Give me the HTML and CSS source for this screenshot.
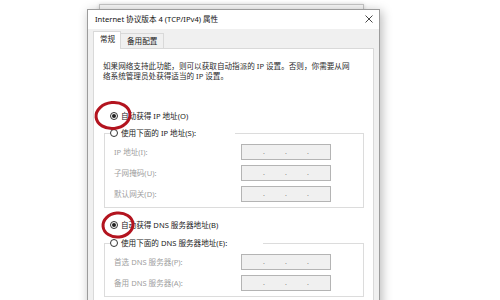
FILE: index.html
```html
<!DOCTYPE html>
<html lang="zh-CN">
<head>
<meta charset="utf-8">
<title>Internet 协议版本 4 (TCP/IPv4) 属性</title>
<link rel="stylesheet" href="styles.css">
</head>
<body>
<div class="desktop">
  <div class="backwin"></div>
  <div class="dialog">
    <div class="titlebar">
      <span class="title">Internet 协议版本 4 (TCP/IPv4) 属性</span>
      <svg class="close" width="8" height="8" viewBox="0 0 8 8"><path d="M0.5 0.5 L7.5 7.5 M7.5 0.5 L0.5 7.5" stroke="#333" stroke-width="0.9" fill="none"/></svg>
    </div>
    <div class="body">
      <div class="tabs">
        <div class="tab active">常规</div>
        <div class="tab">备用配置</div>
      </div>
      <div class="panel">
        <p class="desc">如果网络支持此功能，则可以获取自动指派的 IP 设置。否则，你需要从网<br>络系统管理员处获得适当的 IP 设置。</p>
        <div class="radio-row first"><span class="radio checked"></span><span>自动获得 IP 地址(O)</span></div>
        <fieldset class="group group-ip">
          <legend class="radio-row"><span class="radio"></span><span>使用下面的 IP 地址(S):</span></legend>
          <div class="field"><span class="label">IP 地址(I):</span><span class="ipbox"><b>.</b><b>.</b><b>.</b></span></div>
          <div class="field"><span class="label">子网掩码(U):</span><span class="ipbox"><b>.</b><b>.</b><b>.</b></span></div>
          <div class="field"><span class="label">默认网关(D):</span><span class="ipbox"><b>.</b><b>.</b><b>.</b></span></div>
        </fieldset>
        <div class="radio-row dns"><span class="radio checked"></span><span>自动获得 DNS 服务器地址(B)</span></div>
        <fieldset class="group group-dns">
          <legend class="radio-row"><span class="radio"></span><span>使用下面的 DNS 服务器地址(E):</span></legend>
          <div class="field"><span class="label">首选 DNS 服务器(P):</span><span class="ipbox"><b>.</b><b>.</b><b>.</b></span></div>
          <div class="field"><span class="label">备用 DNS 服务器(A):</span><span class="ipbox"><b>.</b><b>.</b><b>.</b></span></div>
        </fieldset>
      </div>
    </div>
  </div>
  <svg class="marks" width="500" height="300" viewBox="0 0 500 300">
    <ellipse cx="113" cy="115.5" rx="17" ry="13" transform="rotate(-6 113 115.5)" fill="none" stroke="#b3141f" stroke-width="3"/>
    <ellipse cx="118" cy="225" rx="15" ry="12" transform="rotate(-6 118 225)" fill="none" stroke="#b3141f" stroke-width="3"/>
  </svg>
</div>
</body>
</html>
```

FILE: styles.css
```css
* { box-sizing: border-box; }
html, body { margin: 0; padding: 0; background: #fff; }
body {
  font-family: "Noto Sans", "Noto Sans CJK SC", sans-serif;
  font-size: 7.6px;
  color: #222;
}
.desktop {
  position: relative;
  width: 500px;
  height: 300px;
  overflow: hidden;
  background: #fff;
}
.backwin {
  position: absolute;
  left: 99px;
  top: 4px;
  width: 265px;
  height: 40px;
  background: #f7f7f7;
  border: 1px solid #c4c4c4;
  box-shadow: 0 0 4px rgba(0,0,0,0.15);
}
.dialog {
  position: absolute;
  left: 87px;
  top: 9px;
  width: 293px;
  height: 320px;
  background: #f0f0f0;
  border: 1px solid #9c9c9c;
  box-shadow: 2px 2px 10px rgba(0,0,0,0.28);
  display: flex;
  flex-direction: column;
}
.titlebar {
  height: 19px;
  background: #fff;
  display: flex;
  align-items: center;
  justify-content: space-between;
  padding: 0 6px 1px 7px;
  color: #111;
}
.title { line-height: 10px; }
.close { display: block; }
.body {
  padding: 2px 5px 0 5px;
  flex: 1;
  display: flex;
  flex-direction: column;
}
.tabs {
  display: flex;
  align-items: flex-end;
  height: 17px;
}
.tab {
  height: 15px;
  padding: 0 6px;
  line-height: 14px;
  border: 1px solid #d9d9d9;
  border-bottom: none;
  background: #f0f0f0;
  color: #222;
}
.tab.active {
  height: 18px;
  width: 28px;
  margin-bottom: -1px;
  background: #fff;
  position: relative;
  z-index: 1;
  line-height: 15px;
  padding: 0 0 0 6px;
}
.tab + .tab { border-left: none; }
.panel {
  flex: 1;
  background: #fff;
  border: 1px solid #d9d9d9;
  padding: 12px 0 0 9px;
}
.desc {
  margin: 0;
  line-height: 10px;
  white-space: nowrap;
  color: #2a2a2a;
}
.radio-row {
  display: flex;
  align-items: center;
  height: 10px;
  line-height: 10px;
  gap: 3px;
  white-space: nowrap;
  color: #222;
}
.radio-row.first { margin: 30px 0 0 7px; }
.radio-row.dns { margin: 12px 0 0 7px; }
.radio {
  width: 8px;
  height: 8px;
  border-radius: 50%;
  border: 1px solid #333;
  background: #fff;
  display: flex;
  align-items: center;
  justify-content: center;
  flex: none;
}
.radio.checked::after {
  content: "";
  width: 4px;
  height: 4px;
  border-radius: 50%;
  background: #222;
}
.group {
  margin: 7px 0 0 1px;
  width: 260px;
  border: 1px solid #dcdcdc;
  padding: 6px 0 5px 5px;
  display: flex;
  flex-direction: column;
  gap: 5px;
  min-width: 0;
}
.group-dns { margin-top: 8px; }
.group legend { padding: 0; }
.group-ip legend { width: 125px; }
.group-dns legend { width: 153px; }
.field {
  display: flex;
  align-items: center;
  height: 16px;
  padding-left: 4px;
}
.label {
  width: 127px;
  color: #a0a0a0;
  white-space: nowrap;
  line-height: 10px;
}
.ipbox {
  width: 90px;
  height: 16px;
  background: #f0f0f0;
  border: 1px solid #b4b4b4;
  display: flex;
  justify-content: space-evenly;
  align-items: center;
}
.ipbox b {
  font-weight: normal;
  color: #8a8a8a;
  width: 0;
  display: flex;
  justify-content: center;
  line-height: 8px;
  font-size: 7px;
}
.marks {
  position: absolute;
  left: 0;
  top: 0;
  pointer-events: none;
}
```
